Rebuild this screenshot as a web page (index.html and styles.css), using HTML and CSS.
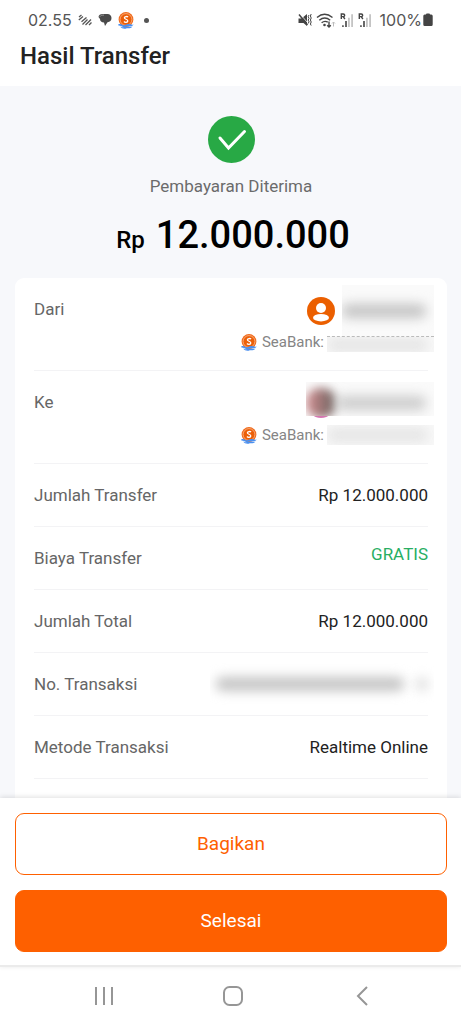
FILE: index.html
```html
<!DOCTYPE html>
<html lang="id">
<head>
<meta charset="utf-8">
<meta name="viewport" content="width=device-width, initial-scale=1">
<title>Hasil Transfer</title>
<link rel="stylesheet" href="styles.css">
</head>
<body>
<svg class="sprite" aria-hidden="true">
  <symbol id="seabank" viewBox="0 0 16 17">
    <circle cx="8" cy="7.5" r="7.4" fill="#f06a1c"/>
    <circle cx="8" cy="7.5" r="5.9" fill="#ec5f08" stroke="#f9b78c" stroke-width=".8"/>
    <path d="M10 5.2C9.400 4.300 6.500 4.100 6.400 5.900C6.300 7.500 9.900 7 9.800 8.900C9.700 10.700 6.800 10.600 6 9.500" fill="none" stroke="#fff" stroke-width="1.300"/>
    <path d="M.3 12.300C2 11.600 3.200 12.100 4.500 12.900C6.500 14 8 12.300 10 12.100C12 11.900 13.500 13.200 15.700 12.400C14.500 14.200 12.500 14.500 10.800 14.100C9 13.700 7.500 15.500 5.200 14.900C3.200 14.500 2 13.300.3 13.600Z" fill="#4a90f0"/>
    <path d="M2 14.600C5 16 7.500 14.600 9.500 14.500C11.500 14.400 13 15 14.500 14.400C12.500 16.800 10.500 16 8.800 16.200C6.500 17.300 4 16.800 2 14.600Z" fill="#4a90f0"/>
  </symbol>
  <symbol id="signal" viewBox="0 0 14 15">
    <path d="M1.300 6V1H3.200C5.200 1 5.200 3.600 3.200 3.600H1.300M3.200 3.600L4.900 6" fill="none" stroke="#444" stroke-width="1.400"/>
    <path d="M2.200 12.300h1.500V14H2.200zM5.200 8h1.600v6H5.200z" fill="#444"/>
    <path d="M8 4.800h1.800V14H8zM11.200 1.200h1.800V14h-1.800z" fill="#c4c4c4"/>
  </symbol>
</svg>
<div class="app">
  <div class="status">
    <div class="status-group">
      <span class="clock">02.55</span>
      <svg class="ic-lines" viewBox="0 0 14 12" fill="none" stroke="#555" stroke-width="1.300"><path d="M1 3L3.500 1M.8 6L5 2.600M3.500 7.800L8.500 3.500M4.500 10.500L9.500 5.500M7.500 11L13 5.500M11 11L13.500 8.500"/></svg>
      <svg class="ic-chat" viewBox="0 0 14 14"><path d="M4.500 1H9.500C12 1 13.500 2.800 13.500 5C13.500 7.500 12 9 9.500 9.300L7 13L6 9.500C3.500 9.500 2 8 2 6L.5 4C.7 2 2.300 1 4.500 1Z" fill="#4a4a4a"/><path d="M1.800 3.700C2.800 2.400 4 2 6 2.100" fill="none" stroke="#aaa" stroke-width=".8"/></svg>
      <svg class="coin"><use href="#seabank"/></svg>
      <span class="dot"></span>
    </div>
    <div class="status-group status-right">
      <svg class="ic-mute" viewBox="0 0 14 14"><path d="M.5 5.500H3.500L9 1V13L5.500 10H.5Z" fill="#444"/><path d="M2 1L9.500 9.500" stroke="#fff" stroke-width=".8"/><path d="M1 1.500L9.500 12" stroke="#444" stroke-width="1.400"/><path d="M11 2l-.8 1.700.8 1.700-.8 1.700.8 1.700-.8 1.700M13.200 1l-.8 2 .8 2-.8 2 .8 2-.8 2 .8 1.500" fill="none" stroke="#444"/></svg>
      <svg class="ic-wifi" viewBox="0 0 20 15" fill="none" stroke="#444" stroke-width="1.400"><path d="M1 4.500Q8.500-2 16.500 4.500M3.300 7.200Q8.700 2.600 14.200 7.200M5.600 9.800Q8.700 7.300 11.800 9.200"/><circle cx="8.500" cy="12" r=".6" fill="#444"/><path d="M13 8.500V14M11.200 12.200L13 14L14.800 12.200"/><path d="M17.500 13.500V9M16 10.500L17.500 9L19 10.500" stroke="#bbb" stroke-width="1"/></svg>
      <svg class="ic-signal"><use href="#signal"/></svg>
      <svg class="ic-signal"><use href="#signal"/></svg>
      <span class="battery-text">100%</span>
      <svg class="ic-battery" viewBox="0 0 10 14"><path d="M3 1.500Q3 .5 4 .5H6Q7 .5 7 1.500H8.300Q9.700 1.500 9.700 3V11.500Q9.700 13 8.300 13H1.700Q.3 13 .3 11.500V3Q.3 1.500 1.700 1.500Z" fill="#444"/></svg>
    </div>
  </div>
  <header class="header"><h1 class="title">Hasil Transfer</h1></header>
  <main class="content">
    <section class="summary">
      <svg class="check" viewBox="0 0 47 47"><circle cx="23.500" cy="23.500" r="23.500" fill="#28a945"/><path d="M12 22L20.500 32L36.500 15.500" fill="none" stroke="#fff" stroke-width="3" stroke-linecap="round"/></svg>
      <p class="state">Pembayaran Diterima</p>
      <p class="amount"><span class="currency">Rp</span><span class="number">12.000.000</span></p>
    </section>
    <dl class="card">
      <div class="row party">
        <dt>Dari</dt>
        <dd>
          <div class="person">
            <svg class="avatar" viewBox="0 0 28 28"><circle cx="14" cy="14" r="14" fill="#eb5f00"/><circle cx="14" cy="11" r="5" fill="#fff"/><ellipse cx="14" cy="20.700" rx="8" ry="3.700" fill="#fff"/></svg>
            <span class="mask mask-name"><span class="smudge"></span></span>
          </div>
          <div class="bank"><svg class="coin"><use href="#seabank"/></svg><span>SeaBank:</span><span class="mask mask-number mask-digits"><span class="smudge"></span></span></div>
        </dd>
      </div>
      <div class="row party">
        <dt>Ke</dt>
        <dd>
          <div class="person">
            <span class="avatar avatar-photo"></span>
            <span class="mask mask-person"><span class="photo"></span><span class="smudge"></span></span>
          </div>
          <div class="bank"><svg class="coin"><use href="#seabank"/></svg><span>SeaBank:</span><span class="mask mask-number"><span class="smudge"></span></span></div>
        </dd>
      </div>
      <div class="row"><dt>Jumlah Transfer</dt><dd>Rp 12.000.000</dd></div>
      <div class="row fee"><dt>Biaya Transfer</dt><dd>GRATIS</dd></div>
      <div class="row"><dt>Jumlah Total</dt><dd>Rp 12.000.000</dd></div>
      <div class="row"><dt>No. Transaksi</dt><dd class="mask mask-id"><span class="smudge"></span><span class="smudge short"></span></dd></div>
      <div class="row"><dt>Metode Transaksi</dt><dd>Realtime Online</dd></div>
    </dl>
  </main>
  <footer class="actions">
    <button class="btn btn-outline" type="button">Bagikan</button>
    <button class="btn btn-solid" type="button">Selesai</button>
  </footer>
  <nav class="navbar">
    <button class="nav-btn" type="button" aria-label="Aplikasi terbaru"><svg class="nav-icon" viewBox="0 0 20 20"><path d="M2 1V19M10 1V19M18 1V19"/></svg></button>
    <button class="nav-btn" type="button" aria-label="Beranda"><svg class="nav-icon" viewBox="0 0 20 20"><rect x="1" y="1" width="18" height="18" rx="5.500"/></svg></button>
    <button class="nav-btn" type="button" aria-label="Kembali"><svg class="nav-icon" viewBox="0 0 20 20"><path d="M15 1L6 10L15 19"/></svg></button>
  </nav>
</div>
</body>
</html>
```
FILE: styles.css
```css
* { box-sizing: border-box; }
body, h1, p, dl, dd { margin: 0; }
body { font-family: Roboto, sans-serif; color: #222; background: #fff; }
svg { display: block; flex: none; }
.sprite { position: absolute; width: 0; height: 0; }
.app { display: flex; flex-direction: column; min-height: 100vh; }

.status { display: flex; justify-content: space-between; align-items: center; height: 40px; padding: 0 28px; color: #555; }
.status-group { display: flex; align-items: center; gap: 6px; }
.clock, .battery-text { font-family: Inter, sans-serif; font-size: 16px; line-height: 20px; }
.status-right { gap: 4px; }
.battery-text { margin-left: 4px; }
.ic-lines { width: 14px; height: 12px; }
.ic-chat, .ic-mute { width: 14px; height: 14px; }
.ic-wifi { width: 20px; height: 15px; }
.ic-signal { width: 14px; height: 15px; }
.ic-battery { width: 10px; height: 14px; margin-left: -3px; }
.coin { width: 16px; height: 17px; }
.dot { width: 5px; height: 5px; margin-left: 4px; border-radius: 50%; background: #555; }

.header { height: 46px; padding: 0 20px; }
.title { font-size: 24px; font-weight: 500; line-height: 32px; color: #222; }

.content { display: flex; flex: 1; flex-direction: column; padding: 30px 14px 0 15px; background: #f7f8fb; }
.summary { display: flex; flex-direction: column; align-items: center; padding-bottom: 14px; }
.check { width: 47px; height: 47px; }
.state { margin-top: 11px; font-size: 17px; line-height: 24px; color: #6b6b6b; }
.amount { display: flex; align-items: baseline; gap: 11px; margin-top: 14px; padding-left: 4px; font-weight: 500; line-height: 47px; color: #000; }
.currency { font-size: 24px; }
.number { font-size: 38px; }

.card { flex: 1; padding: 0 19px; border-radius: 9px 9px 0 0; background: #fff; }
.row { display: flex; justify-content: space-between; align-items: center; height: 63px; border-bottom: 1px solid #f3f3f5; font-size: 17px; line-height: 24px; }
.row dt { color: #666; }
.fee dd { padding-bottom: 8px; color: #28ae63; }
.party { align-items: flex-start; height: 93px; padding-top: 19px; }
.person { display: flex; justify-content: flex-end; align-items: center; gap: 7px; height: 28px; }
.avatar { width: 28px; height: 28px; }
.avatar-photo { border-radius: 50%; background: linear-gradient(#8a7470, #d878b4); }
.bank { display: flex; justify-content: flex-end; align-items: center; gap: 5px; height: 20px; margin-top: 7px; font-size: 15px; color: #858585; }
.bank .mask { margin-left: -2px; }

/* Redacted values */
.mask { display: flex; align-items: center; overflow: hidden; }
.smudge { flex: 1; height: 14px; border-radius: 6px; background: #c4c4c4; filter: blur(6px); }
.mask-name { width: 92px; height: 52px; margin-right: -6px; padding-right: 8px; background: #fafafa; }
.mask-number { width: 107px; height: 20px; margin-right: -6px; padding-right: 6px; background: #f8f8f8; }
.mask-number .smudge { background: #e5e5e5; }
.mask-digits { align-self: flex-end; height: 16px; padding-right: 6px; border-top: 1px dashed #bbb; }
.mask-person { z-index: 1; width: 128px; height: 34px; margin: 0 -6px 10px -36px; padding: 8px 8px 0 0; background: #fafafa; }
.mask-person .smudge { background: #ccc; }
.photo { width: 30px; height: 30px; border-radius: 14px; background: linear-gradient(90deg, #d58f93, #68605c); filter: blur(5px); }
.mask-id { width: 224px; height: 54px; gap: 12px; margin-right: -6px; padding: 0 6px; }
.mask-id .short { flex: 0 0 12px; background: #ddd; }

.actions { display: flex; flex-direction: column; gap: 15px; padding: 15px 14px 13px 15px; border-bottom: 2px solid #ebebeb; background: #fff; box-shadow: 0 -1px 5px #00000020; }
.btn { height: 62px; border: 1px solid #fe6000; border-radius: 9px; font-family: inherit; font-size: 19px; line-height: 24px; }
.btn-outline { background: #fff; color: #fe6000; }
.btn-solid { background: #fe6000; color: #fff; }

.navbar { display: grid; grid-template-columns: repeat(3, 129px); justify-content: center; height: 57px; padding-left: 4px; }
.nav-btn { display: flex; justify-content: center; align-items: center; padding: 0; border: 0; background: none; }
.nav-icon { width: 20px; height: 20px; fill: none; stroke: #969696; stroke-width: 2; }
```
